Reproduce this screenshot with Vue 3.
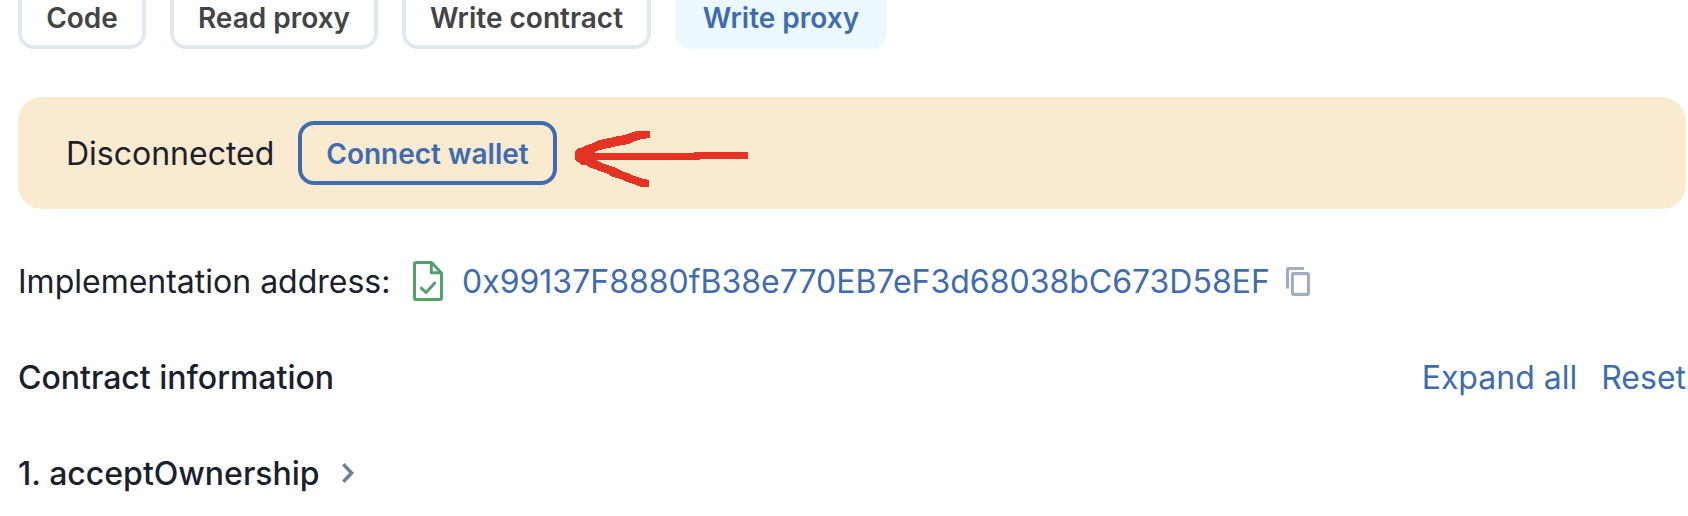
<script setup>
const tabs = [
  { label: 'Code', cls: 'code' },
  { label: 'Read proxy', cls: 'read-proxy' },
  { label: 'Write contract', cls: 'write-contract' },
  { label: 'Write proxy', cls: 'write-proxy active' },
]
</script>

<template>
  <main class="page">
    <nav class="tabs">
      <button v-for="tab in tabs" :key="tab.label" class="button tab" :class="tab.cls">{{ tab.label }}</button>
    </nav>

    <section class="banner">
      <span class="text status">Disconnected</span>
      <button class="button connect">Connect wallet</button>
      <svg class="arrow" viewBox="0 0 173 56" width="173" height="56" shape-rendering="crispEdges">
        <path d="M0 20L3 17H6L12 14L18 12L24 9L35 7L43 5L50 4L55 2L62 0H75V7L66 8L60 10L54 13L47 14L38 16L29 18L21 20L19 22H119V21H173V28H125V29H21L25 31L32 34L39 36L47 40L55 43L62 46L69 48L74 49V56H66L59 53L52 51L46 48L38 46L33 43L27 41L22 39L16 37L11 34L7 34L3 31L0 29Z" />
      </svg>
    </section>

    <section class="row">
      <span class="text impl">Implementation address:</span>
      <svg class="doc" viewBox="0 0 30 40" width="30" height="40">
        <path d="M3.2 1.5H18.5L28.5 12V36.8Q28.5 38.5 26.8 38.5H3.2Q1.5 38.5 1.5 36.8V3.2Q1.5 1.5 3.2 1.5ZM18.3 2V11.7H28" />
        <path d="M8.3 27.2L13 31.5L21.8 22" stroke-linecap="round" />
      </svg>
      <a class="text link address">0x99137F8880fB38e770EB7eF3d68038bC673D58EF</a>
      <svg class="copy" viewBox="0 0 24 29" width="24" height="29">
        <path d="M1.5 21.5V2.6Q1.5 1.5 2.6 1.5H18" />
        <rect x="6.4" y="6.6" width="16" height="20.8" rx="0.8" />
      </svg>
    </section>

    <section class="row heading">
      <span class="text info">Contract information</span>
      <div class="actions">
        <a class="text link expand">Expand all</a>
        <a class="text link reset">Reset</a>
      </div>
    </section>

    <section class="row method">
      <span class="text">1. acceptOwnership</span>
      <svg class="chevron" viewBox="0 0 12 20" width="12" height="20">
        <path d="M1.3 1.3L9.6 10L1.3 18.7" />
      </svg>
    </section>
  </main>
</template>

<style>
body {
  background: #fff;
  overflow: hidden;
}
</style>

<style scoped>
.page {
  box-sizing: border-box;
  width: 1688px;
  height: 516px;
  padding: 0 2px 0 18px;
  overflow: hidden;
  font: 400 32px/48px Inter, "Liberation Sans", sans-serif;
  font-optical-sizing: none;
  font-variation-settings: "opsz" 14;
  color: #1a202c;
  white-space: nowrap;
}
.tabs {
  display: flex;
  gap: 24px;
  margin-top: -15px;
}
.text { padding-top: 2px; }
.button {
  box-sizing: border-box;
  flex: none;
  height: 64px;
  padding: 2px 0 0;
  border: 4px solid #e2e8f0;
  border-radius: 16px;
  background: transparent;
  font: inherit;
  font-size: 28px;
  font-weight: 600;
  line-height: 54px;
  text-align: center;
}
.tab { color: #434444; }
.code { width: 128px; }
.read-proxy { width: 208px; }
.write-contract { width: 249px; }
.write-proxy { width: 212px; }
.active {
  color: #3f6cb0;
  background: #ebf8ff;
  border-color: #ebf8ff;
}
.banner {
  box-sizing: border-box;
  display: flex;
  align-items: center;
  height: 112px;
  margin-top: 48px;
  padding: 24px 48px;
  border-radius: 24px;
  background: #faeacf;
}
.status { width: 232px; }
.connect {
  width: 259px;
  color: #3f6cb0;
  border-color: #3f6cb0;
}
.arrow {
  margin: 12px 0 0 18px;
  fill: #e43323;
}
.row {
  display: flex;
  align-items: center;
  height: 48px;
  margin-top: 48px;
}
.impl { width: 395px; }
.doc {
  fill: none;
  stroke: #55a16e;
  stroke-width: 3;
  stroke-linejoin: round;
}
.link { color: #3f6cb0; }
.address {
  width: 824px;
  margin-left: 19px;
}
.copy {
  fill: none;
  stroke: #a2aec0;
  stroke-width: 3.1;
}
.heading {
  justify-content: space-between;
  font-weight: 500;
}
.actions {
  display: flex;
  gap: 24px;
  font-weight: 400;
}
.method { font-weight: 500; }
.chevron {
  margin-left: 22.5px;
  fill: none;
  stroke: #718096;
  stroke-width: 3.5;
}
</style>
